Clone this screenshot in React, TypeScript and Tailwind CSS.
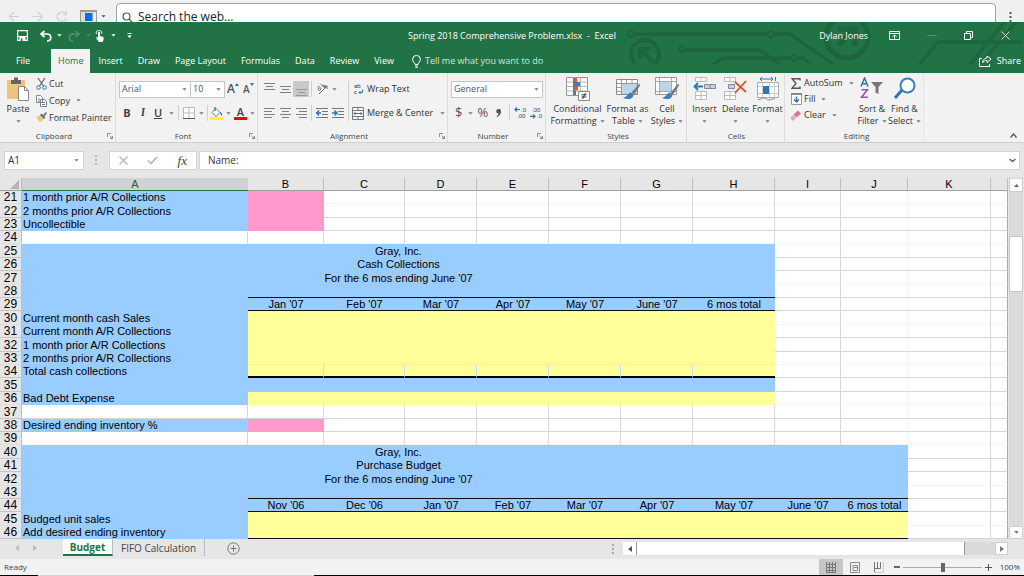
// App.tsx
import React, { useState, type ReactNode } from 'react';

type Fill = 'none' | 'blue' | 'pink' | 'yellow';

type Row = {
  n: number;
  label?: string;
  // text centred across A:H
  title?: string;
  months?: string[];
  // fill of column A, then fill of B up to column `to`
  a?: Fill;
  fill?: Fill;
  to?: number;
  line?: 'header' | 'above' | 'total' | 'end' | 'ticks';
};

const COLUMNS = ['B', 'C', 'D', 'E', 'F', 'G', 'H', 'I', 'J', 'K', ''];

const ROWS: Row[] = [
  { n: 21, label: '1 month prior A/R Collections', a: 'blue', fill: 'pink', to: 1 },
  { n: 22, label: '2 months prior A/R Collections', a: 'blue', fill: 'pink', to: 1 },
  { n: 23, label: 'Uncollectible', a: 'blue', fill: 'pink', to: 1 },
  { n: 24 },
  { n: 25, title: 'Gray, Inc.', a: 'blue', fill: 'blue', to: 7 },
  { n: 26, title: 'Cash Collections', a: 'blue', fill: 'blue', to: 7 },
  { n: 27, title: "For the 6 mos ending June '07", a: 'blue', fill: 'blue', to: 7 },
  { n: 28, a: 'blue', fill: 'blue', to: 7, line: 'above' },
  {
    n: 29,
    months: ["Jan '07", "Feb '07", "Mar '07", "Apr '07", "May '07", "June '07", '6 mos total'],
    a: 'blue',
    fill: 'blue',
    to: 7,
    line: 'header',
  },
  { n: 30, label: 'Current month cash Sales', a: 'blue', fill: 'yellow', to: 7 },
  { n: 31, label: 'Current month A/R Collections', a: 'blue', fill: 'yellow', to: 7 },
  { n: 32, label: '1 month prior A/R Collections', a: 'blue', fill: 'yellow', to: 7 },
  { n: 33, label: '2 months prior A/R Collections', a: 'blue', fill: 'yellow', to: 7, line: 'ticks' },
  { n: 34, label: 'Total cash collections', a: 'blue', fill: 'yellow', to: 7, line: 'total' },
  { n: 35, a: 'blue', fill: 'blue', to: 7 },
  { n: 36, label: 'Bad Debt Expense', a: 'blue', fill: 'yellow', to: 7 },
  { n: 37 },
  { n: 38, label: 'Desired ending inventory %', a: 'blue', fill: 'pink', to: 1 },
  { n: 39 },
  { n: 40, title: 'Gray, Inc.', a: 'blue', fill: 'blue', to: 9 },
  { n: 41, title: 'Purchase Budget', a: 'blue', fill: 'blue', to: 9 },
  { n: 42, title: "For the 6 mos ending June '07", a: 'blue', fill: 'blue', to: 9 },
  { n: 43, a: 'blue', fill: 'blue', to: 9, line: 'above' },
  {
    n: 44,
    months: ["Nov '06", "Dec '06", "Jan '07", "Feb '07", "Mar '07", "Apr '07", "May '07", "June '07", '6 mos total'],
    a: 'blue',
    fill: 'blue',
    to: 9,
    line: 'header',
  },
  { n: 45, label: 'Budged unit sales', a: 'blue', fill: 'yellow', to: 9 },
  { n: 46, label: 'Add desired ending inventory', a: 'blue', fill: 'yellow', to: 9, line: 'end' },
];

const fills: Record<Fill, string> = {
  none: 'bg-white',
  blue: 'bg-[#99ccff]',
  pink: 'bg-[#ff99cc]',
  yellow: 'bg-[#ffff99]',
};

const bottoms: Record<Fill, string> = {
  none: '',
  blue: 'border-b border-b-[#99ccff]',
  pink: 'border-b border-b-[#ff99cc]',
  yellow: 'border-b border-b-[#ffff99]',
};

const Caret = ({ className = 'text-[#777]' }: { className?: string }) => (
  <svg width="5" height="3" viewBox="0 0 5 3" className={`shrink-0 ${className}`}>
    <path d="M.3.200h4.400L2.500 2.600z" fill="currentColor" />
  </svg>
);

const Sep = () => <span className="h-4 w-px shrink-0 bg-[#d0d0d0]" />;

/* ---------- Browser strip and title bar ---------- */

const BrowserStrip = () => (
  <div className="flex h-[22px] items-start overflow-hidden bg-[#f0f0f0] pt-[3px]">
    <div className="flex w-[116px] shrink-0 items-center gap-3 pt-[7px] pl-2 text-[#cfcfcf]">
      <svg width="12" height="13" viewBox="0 0 12 13" fill="none" stroke="currentColor" strokeWidth="1.2">
        <path d="M11 6.500H1.500M6 2L1.500 6.500 6 11" />
      </svg>
      <svg width="12" height="13" viewBox="0 0 12 13" fill="none" stroke="currentColor" strokeWidth="1.2">
        <path d="M0 6.500h10M6 2l4.500 4.500L6 11" />
      </svg>
      <svg width="12" height="13" viewBox="0 0 12 13" fill="none" stroke="currentColor" strokeWidth="1.2">
        <path d="M10.500 8A4.700 4.700 0 1 1 9.500 3.500M10.500 1v3.500H7" />
      </svg>
      <div className="flex items-center gap-1 text-[#555]">
        <svg width="17" height="13" viewBox="0 0 17 13">
          <path d="M0 0h17v13H0z" fill="#9a9a9a" />
          <path d="M1 2h15v11H1z" fill="#dcdcdc" />
          <path d="M5 3h7.500v8H5z" fill="#0a6fdc" />
          <path d="M13.500 3h2v8h-2z" fill="#f5f5f5" />
        </svg>
        <Caret className="text-[#555]" />
      </div>
    </div>
    <label className="flex h-7 flex-1 items-center gap-[5px] rounded-t-sm border border-[#a0a0a0] bg-white pl-[5px]">
      <svg width="11" height="11" viewBox="0 0 11 11" fill="none" stroke="#555" strokeWidth="1.200">
        <circle cx="4.500" cy="4.500" r="3.500" />
        <path d="M7 7l3.500 3.500" />
      </svg>
      <input
        type="text"
        aria-label="Search the web"
        placeholder="Search the web..."
        className="min-w-0 flex-1 bg-transparent text-xs text-[#222] outline-none placeholder:text-[#222]"
      />
    </label>
    <button type="button" aria-label="More" className="w-7 pt-2">
      <svg width="3" height="14" viewBox="0 0 3 14" className="mx-auto" fill="#555">
        <path d="M.5 1h2v2h-2zM.5 5h2v2h-2zM.5 9h2v2h-2z" />
      </svg>
    </button>
  </div>
);

const Circuit = () => (
  <svg
    width="404"
    height="42"
    viewBox="620 22 404 42"
    className="pointer-events-none absolute top-0 right-0"
    fill="none"
    stroke="#1c653d"
    strokeWidth="3"
  >
    <circle cx="631" cy="34" r="3" strokeWidth="2" />
    <path d="M634 34h134M774 34h16l43 30" />
    <circle cx="771" cy="34" r="3" strokeWidth="2" />
    <circle cx="645" cy="54" r="14" strokeWidth="4" />
    <path d="M640 59V49h10M640 49l13 13" strokeWidth="4" />
    <circle cx="682" cy="49" r="3" strokeWidth="2" />
    <path d="M685 50h75l19 14M712 65l11-7h68M797 58h6l9 7" />
    <circle cx="794" cy="58" r="3" strokeWidth="2" />
    <circle cx="847" cy="37" r="21" strokeWidth="5" />
    <path d="M838 29h17v17M854 30l-16 15" strokeWidth="5" />
    <path d="M919 65l19-23h83M970 65l35-44M980 65l37-44" />
  </svg>
);

const TitleBar = () => (
  <div className="relative grid h-[27px] grid-cols-[1fr_auto_1fr] items-center text-white">
    <div className="flex items-center pl-[17px]">
      <button type="button" aria-label="Save">
        <svg width="11" height="11" viewBox="0 0 11 11" fill="none" stroke="#fff" strokeWidth="1.200">
          <path d="M.6.6h9.800v9.800H.6zM1 6.500h9" />
          <path d="M2.500 7h6v3.500h-6z" fill="#fff" stroke="none" />
          <path d="M4 8.500h1.500V11H4z" fill="#217346" stroke="none" />
        </svg>
      </button>
      <button type="button" aria-label="Undo" className="ml-3 flex items-center gap-[5px]">
        <svg width="12" height="12" viewBox="0 0 12 12" fill="none" stroke="#fff" strokeWidth="1.700">
          <path d="M4.500 1L1 4l3.500 3M1 4h6c5 0 5 7 0 7" />
        </svg>
        <Caret className="text-white" />
      </button>
      <button type="button" aria-label="Redo" className="ml-[6px] flex items-center gap-[6px] text-[#4d8f6b]">
        <svg width="12" height="12" viewBox="0 0 12 12" fill="none" stroke="currentColor" strokeWidth="1.600">
          <path d="M7.500 1L11 4 7.500 7M11 4H5c-5 0-5 7 0 7" />
        </svg>
        <Caret className="text-[#4d8f6b]" />
      </button>
      <button type="button" aria-label="Touch mode" className="ml-1 flex items-center gap-[6px]">
        <svg width="10" height="12" viewBox="0 0 10 12" fill="#fff">
          <path d="M3 2.500a1 1 0 0 1 2 0V6l3.500 1v3L7.500 12H4L1 8l1-1 1 .8z" />
          <path d="M1.500 4a2.800 2.800 0 1 1 5 0" fill="none" stroke="#fff" />
        </svg>
        <Caret className="text-white" />
      </button>
      <button type="button" aria-label="Customize toolbar" className="ml-[11px]">
        <svg width="5" height="6" viewBox="0 0 5 6" fill="#fff">
          <path d="M.5 0h4v1h-4zM.3 2.500h4.400L2.500 5z" />
        </svg>
      </button>
    </div>
    <span className="text-[9px] whitespace-pre">Spring 2018 Comprehensive Problem.xlsx  -  Excel</span>
    <div className="flex items-center justify-end pr-[14px]">
      <span className="mr-[21px] text-[9px]">Dylan Jones</span>
      <button type="button" aria-label="Ribbon display options">
        <svg width="11" height="9" viewBox="0 0 11 9" fill="none" stroke="#fff">
          <path d="M.5.500h10v8H.5zM1 2.500h9M5.500 8V4M3.500 5.800l2-2 2 2" />
        </svg>
      </button>
      <button type="button" aria-label="Minimize" className="ml-[27px]">
        <svg width="10" height="2" viewBox="0 0 10 2">
          <path d="M0 .5h10" stroke="#4d8f6b" />
        </svg>
      </button>
      <button type="button" aria-label="Restore" className="ml-[27px]">
        <svg width="9" height="9" viewBox="0 0 9 9" fill="none" stroke="#fff">
          <path d="M.5 2.500h6v6h-6zM2.500 2V.500h6v6H7" />
        </svg>
      </button>
      <button type="button" aria-label="Close" className="ml-7">
        <svg width="9" height="9" viewBox="0 0 9 9" stroke="#fff" strokeWidth=".8">
          <path d="M.5.500l8 8M8.500.500l-8 8" />
        </svg>
      </button>
    </div>
  </div>
);

const TABS = ['Home', 'Insert', 'Draw', 'Page Layout', 'Formulas', 'Data', 'Review', 'View'];

const RibbonTabs = ({ active, onSelect }: { active: string; onSelect: (t: string) => void }) => (
  <div className="relative flex h-6 items-stretch gap-px text-[9px] text-white">
    <button type="button" className="w-[50px] pr-1 text-center">
      File
    </button>
    {TABS.map((t) => (
      <button
        key={t}
        type="button"
        onClick={() => onSelect(t)}
        className={t === active ? 'bg-[#f2f2f2] px-[7px] text-[#217346]' : 'px-[7px]'}
      >
        {t}
      </button>
    ))}
    <button type="button" className="ml-[10px] flex items-center gap-1 text-[#d5e6dc]">
      <svg width="9" height="13" viewBox="0 0 9 13" fill="none" stroke="#fff">
        <path d="M3 9.500C3 7.500.600 7 .6 4.300a3.900 3.900 0 0 1 7.800 0C8.400 7 6 7.500 6 9.500zM3 11h3M3.500 12.500h2" />
      </svg>
      Tell me what you want to do
    </button>
    <button type="button" className="mr-[3px] ml-auto flex items-center gap-[5px]">
      <svg width="13" height="12" viewBox="0 0 13 12" fill="none" stroke="#fff">
        <path d="M3 3.500H.5v8h10V9M8 1l4 3-4 3.500V5.500C6 5.300 4.500 6 3.500 8c0-3 2-5 4.500-5z" />
      </svg>
      Share
    </button>
  </div>
);

/* ---------- Ribbon ---------- */

const Group = ({
  label,
  className,
  launcher,
  children,
}: {
  label: string;
  className: string;
  launcher?: boolean;
  children: ReactNode;
}) => (
  <section className={`flex shrink-0 flex-col ${className}`}>
    <div className="flex h-14 items-start">{children}</div>
    <div className="flex h-[13px] items-center text-[8px] text-[#444]">
      <span className="flex-1 text-center">{label}</span>
      {launcher && (
        <button type="button" aria-label={`${label} settings`} className="flex w-[10px] justify-center">
          <svg width="6" height="6" viewBox="0 0 6 6" fill="none" stroke="#777" strokeWidth=".8">
            <path d="M.5 4V.500H4M2.500 2.500l3 3M5.500 3v2.500H3" />
          </svg>
        </button>
      )}
    </div>
  </section>
);

const BigButton = ({
  icon,
  lines,
  className,
}: {
  icon: ReactNode;
  lines: string[];
  className: string;
}) => (
  <button type="button" className={`flex shrink-0 flex-col items-center pt-1 text-[9px] leading-3 ${className}`}>
    <span className="flex h-[26px] items-start">{icon}</span>
    <span className="whitespace-nowrap">{lines[0]}</span>
    <span className="flex h-3 items-center gap-[3px] whitespace-nowrap">
      {lines[1]}
      <Caret />
    </span>
  </button>
);

const LineButton = ({
  icon,
  text,
  caret,
  className = 'h-[17px] gap-[2px]',
}: {
  icon: ReactNode;
  text: string;
  caret?: boolean;
  className?: string;
}) => (
  <button type="button" className={`flex items-center text-[9px] whitespace-nowrap ${className}`}>
    <span className="flex w-3 shrink-0 justify-center">{icon}</span>
    {text}
    {caret && (
      <span className="ml-1">
        <Caret />
      </span>
    )}
  </button>
);

const RibbonSelect = ({ label, value, className }: { label: string; value: string; className: string }) => (
  <span className={`relative flex h-[17px] shrink-0 items-center border border-[#c6c6c6] bg-white ${className}`}>
    <select
      aria-label={label}
      defaultValue={value}
      className="w-full appearance-none bg-transparent px-[2px] text-[9px] text-[#44546a] outline-none"
    >
      <option>{value}</option>
    </select>
    <span className="pointer-events-none absolute right-[3px]">
      <Caret />
    </span>
  </span>
);

// three alignments of the same paragraph lines
const LINES = {
  top: 'M0 .5h11M2 3.500h7M0 6.500h11',
  middle: 'M0 3.500h11M2 6.500h7M0 9.500h11',
  bottom: 'M0 6.500h11M2 9.500h7M0 12.500h11',
  left: 'M0 1.500h11M0 4.500h8M0 7.500h11M0 10.500h8',
  center: 'M0 1.500h11M2 4.500h7M0 7.500h11M2 10.500h7',
  right: 'M0 1.500h11M3 4.500h8M0 7.500h11M3 10.500h8',
};

const AlignButton = ({ kind, selected }: { kind: keyof typeof LINES; selected?: boolean }) => (
  <button
    type="button"
    aria-label={`Align ${kind}`}
    className={selected ? 'flex h-4 w-4 items-center justify-center bg-[#c9c9c9]' : 'flex h-4 w-4 items-center justify-center'}
  >
    <svg width="11" height="13" viewBox="0 0 11 13" stroke={selected ? '#999' : '#808080'}>
      <path d={LINES[kind]} />
    </svg>
  </button>
);

const IndentIcon = ({ flip }: { flip?: boolean }) => (
  <svg width="12" height="12" viewBox="0 0 12 12" fill="none">
    <path d="M0 1.500h12M6 4.500h6M6 7.500h6M0 10.500h12" stroke="#777" />
    <path d={flip ? 'M0 6h4.500M2.500 3.500L5 6 2.500 8.500' : 'M5 6H.5M3 3.500L.5 6 3 8.500'} stroke="#2f74b5" strokeWidth="1.500" />
  </svg>
);

const DecimalIcon = ({ flip }: { flip?: boolean }) => (
  <svg width="13" height="14" viewBox="0 0 13 14" fontSize="6" fill="#444" className="font-[Liberation_Sans,sans-serif]">
    <text x={flip ? 2 : 7} y="5.500">{flip ? '.00' : '.0'}</text>
    <text x={flip ? 7 : 3} y="12.300">{flip ? '.0' : '.00'}</text>
    <path
      d={flip ? 'M0 10.300h5M3 8.300l2 2-2 2' : 'M6 3.500H1M3 1.500l-2 2 2 2'}
      fill="none"
      stroke="#2f74b5"
      strokeWidth="1.200"
    />
  </svg>
);

const Brush = () => (
  <>
    <path d="M23.500 6.500l-8 9 2.500 2 6-9z" fill="#777" />
    <path d="M15 15.500c-3 0-3 4-8 5.500 4 2 10 1.500 10.500-3z" fill="#3c7ebf" />
  </>
);

const ConditionalIcon = () => (
  <svg width="24" height="24" viewBox="0 0 24 24">
    <path d="M.5.500h21v18H.5z" fill="#fff" stroke="#999" />
    <path d="M7.500 1v17M14.500 1v17M1 5h20M1 9.500h20M1 14h20" stroke="#bbb" />
    <path d="M7 1h4v4H7zM7 9h5v4.500H7z" fill="#e0592f" />
    <path d="M7 5h7v4.500H7zM7 13.500h3v4.500H7z" fill="#3c7ebf" />
    <path d="M12.500 14.500h11v9h-11z" fill="#fff" stroke="#888" />
    <path d="M15.500 17.800h5M15.500 20h5M19.500 16l-3 6" stroke="#333" />
  </svg>
);

const TableIcon = () => (
  <svg width="24" height="24" viewBox="0 0 24 24">
    <path d="M.5 2.500h21v15H.5z" fill="#fff" stroke="#888" />
    <path d="M6 7h15v10H6z" fill="#bdd3ea" />
    <path d="M1 6.500h20M1 10.500h5M1 14.500h5M5.500 3v14M10.500 3v3M16 3v3" stroke="#999" fill="none" />
    <Brush />
  </svg>
);

const CellStyleIcon = () => (
  <svg width="24" height="24" viewBox="0 0 24 24">
    <path d="M.5.500h21v17H.5z" fill="#fff" stroke="#999" />
    <path d="M4 5h13v9H4z" fill="#bdd3ea" />
    <path d="M1 4.500h20M1 14.500h20M4.500 1v16M16.500 1v16" stroke="#aaa" fill="none" />
    <Brush />
  </svg>
);

const InsertIcon = () => (
  <svg width="23" height="24" viewBox="0 0 23 24">
    <path d="M2.500.500h11v4h-11zM8 .5v4M2.500 14.500h11v8h-11zM8 14.500v8M2.500 18.500h11" fill="#fff" stroke="#bbb" />
    <path d="M11.500 7.500h11v4h-11zM17 7.500v4" fill="#bdd3ea" stroke="#889" />
    <path d="M10 9.500H1.500M5 6L1.500 9.500 5 13" fill="none" stroke="#2f74b5" strokeWidth="1.800" />
  </svg>
);

const DeleteIcon = () => (
  <svg width="23" height="24" viewBox="0 0 23 24">
    <path d="M.5.500h11v4H.5zM6 .5v4M.5 14.500h11v8H.5zM6 14.500v8M.5 18.500h11" fill="#fff" stroke="#bbb" />
    <path d="M4.500 7.500h6v4h-6z" fill="#bdd3ea" stroke="#889" />
    <path d="M11 5l11 10M22 4L11 16" fill="none" stroke="#d9532c" strokeWidth="1.800" />
  </svg>
);

const FormatIcon = () => (
  <svg width="22" height="24" viewBox="0 0 22 24">
    <path d="M.5 5.500h21v15H.5z" fill="#fff" stroke="#aaa" />
    <path d="M5.500 6v14M12.500 6v14M17.500 6v14M1 9.500h20M1 16.500h20" stroke="#ccc" />
    <path d="M6 9h6v8H6z" fill="#2f74b5" />
    <path d="M3 2h13M5 0L3 2l2 2M14 0l2 2-2 2M18.500 0v4" fill="none" stroke="#2f74b5" />
    <path d="M1 22.500c4 0 3-1.500 6-1.500s2 2 5 2 3-2 6-1" fill="none" stroke="#888" />
  </svg>
);

const SortIcon = () => (
  <svg width="24" height="24" viewBox="0 0 24 24" fill="none" strokeWidth="1.500">
    <path d="M1 9.500L4.500 1 8 9.500M2.200 6.700h4.600" stroke="#2f74b5" />
    <path d="M1.500 12.700h6L1.500 20.200h6.500" stroke="#9553b5" />
    <path d="M11 5h12l-4.500 5v7l-3-1.500V10z" fill="#777" />
  </svg>
);

const Ribbon = () => (
  <div className="flex h-[70px] items-stretch border-b border-[#cfcfcf] bg-[#f2f2f2] text-[#333]">
    <Group label="Clipboard" launcher className="w-[116px] border-r border-[#dcdcdc] pl-[3px]">
      <BigButton
        className="w-[30px]"
        lines={['Paste', '']}
        icon={
          <svg width="22" height="24" viewBox="0 0 22 24">
            <path d="M0 3h18v19H0z" fill="#ecc47c" />
            <path d="M4 3h3V.5h4V3h3v4H4z" fill="#666" />
            <path d="M11.500 9.500h6l4 4v10h-10z" fill="#fff" stroke="#888" />
            <path d="M17.500 9.500v4h4" fill="none" stroke="#888" />
          </svg>
        }
      />
      <div className="flex flex-col pt-[2px] pl-[2px]">
        <LineButton
          text="Cut"
          icon={
            <svg width="11" height="12" viewBox="0 0 11 12" fill="none">
              <path d="M2 0l5.500 8M9 0L3.500 8" stroke="#666" strokeWidth="1.200" />
              <circle cx="2.500" cy="9.500" r="1.800" stroke="#2f74b5" />
              <circle cx="8.500" cy="9.500" r="1.800" stroke="#2f74b5" />
            </svg>
          }
        />
        <LineButton
          text="Copy"
          caret
          icon={
            <svg width="11" height="12" viewBox="0 0 11 12" fill="#fff" stroke="#777" strokeWidth=".9">
              <path d="M.5.500h4l2 2v5h-6zM4.500 4.500h4l2 2v5h-6z" />
              <path d="M2 4h2M2 6h2M6 7.500h3M6 9.500h3" stroke="#2f74b5" />
            </svg>
          }
        />
        <LineButton
          text="Format Painter"
          icon={
            <svg width="12" height="11" viewBox="0 0 12 11">
              <path d="M1 5l4-1.500L8.500 7 5 10.500z" fill="#ecc47c" />
              <path d="M5 3l1.500-1.500 4 4L9 7zM8 3l3-3 1 1-2.500 3z" fill="#666" />
            </svg>
          }
        />
      </div>
    </Group>

    <Group label="Font" launcher className="w-[142px] border-r border-[#dcdcdc] pl-[3px]">
      <div className="flex flex-col gap-2 pt-2">
        <div className="flex h-4 items-center">
          <RibbonSelect label="Font name" value="Arial" className="w-[72px]" />
          <RibbonSelect label="Font size" value="10" className="w-[34px] border-l-0" />
          <button type="button" aria-label="Grow font" className="ml-[2px] flex text-[12px] leading-4 font-semibold text-[#555]">
            A
            <svg width="4" height="3" viewBox="0 0 4 3" className="mt-[2px]">
              <path d="M0 3l2-3 2 3z" fill="#2f74b5" />
            </svg>
          </button>
          <button type="button" aria-label="Shrink font" className="ml-1 flex text-[10px] leading-4 font-semibold text-[#555]">
            A
            <svg width="4" height="3" viewBox="0 0 4 3" className="mt-[2px]">
              <path d="M0 0h4L2 3z" fill="#2f74b5" />
            </svg>
          </button>
        </div>
        <div className="flex h-4 items-center text-[11px] text-[#444]">
          <button type="button" className="w-4 font-bold">
            B
          </button>
          <button type="button" className="w-4 font-serif font-semibold italic">
            I
          </button>
          <button type="button" className="mr-1 w-[14px] font-semibold underline">
            U
          </button>
          <Caret />
          <span className="ml-1 flex">
            <Sep />
          </span>
          <button type="button" aria-label="Borders" className="ml-1 flex items-center gap-1">
            <svg width="12" height="12" viewBox="0 0 12 12" fill="#fff" stroke="#bbb">
              <path d="M.5.500h11v11H.5zM6 0v12M0 6h12" />
              <path d="M0 11.500h12" stroke="#555" />
            </svg>
            <Caret />
          </button>
          <span className="ml-[3px] flex">
            <Sep />
          </span>
          <button type="button" aria-label="Fill color" className="ml-[2px] flex items-center gap-[3px]">
            <svg width="13" height="13" viewBox="0 0 13 13">
              <path d="M2 5.500l4-4L10 5.500l-4 4z" fill="#fff" stroke="#777" />
              <path d="M5 0v4M10 5.500c2 1 1.500 3 1.500 3" stroke="#2f74b5" fill="none" strokeWidth="1.300" />
              <path d="M0 10h13v3H0z" fill="#ffff00" />
            </svg>
            <Caret />
          </button>
          <button type="button" aria-label="Font color" className="ml-[3px] flex items-center gap-[3px]">
            <span className="flex h-[13px] w-[13px] items-start justify-center border-b-[3px] border-[#ff0000] text-[11px] leading-[10px] font-semibold">
              A
            </span>
            <Caret />
          </button>
        </div>
      </div>
    </Group>

    <Group label="Alignment" launcher className="w-[190px] border-r border-[#dcdcdc] pl-[3px]">
      <div className="flex flex-col gap-2 pt-2">
        <div className="flex h-4 items-center">
          <AlignButton kind="top" />
          <AlignButton kind="middle" />
          <AlignButton kind="bottom" selected />
          <span className="ml-[2px] flex">
            <Sep />
          </span>
          <button type="button" aria-label="Orientation" className="ml-1 flex items-center gap-1">
            <svg width="12" height="12" viewBox="0 0 12 12" fill="none" stroke="#666">
              <path d="M3 11l8-8M8 3h3v3" />
              <path d="M1.500 4.500c1.500-2 3 0 3.500 1.500M5 6L3.500 7.500C1 6.500 2 5 3.500 5.500M4.500.800l4 4c1.500-2-.500-3-2-2" />
            </svg>
            <Caret />
          </button>
        </div>
        <div className="flex h-4 items-center">
          <AlignButton kind="left" />
          <AlignButton kind="center" />
          <AlignButton kind="right" />
          <span className="ml-[2px] flex">
            <Sep />
          </span>
          <button type="button" aria-label="Decrease indent" className="ml-1">
            <IndentIcon />
          </button>
          <button type="button" aria-label="Increase indent" className="ml-1">
            <IndentIcon flip />
          </button>
        </div>
      </div>
      <div className="mt-2 ml-1 flex flex-col gap-2 border-l border-[#d0d0d0] pl-[3px]">
        <LineButton
          text="Wrap Text"
          className="h-4 gap-[3px]"
          icon={
            <svg width="12" height="14" viewBox="0 0 12 14" fontSize="6" fill="#333" className="font-[Liberation_Sans,sans-serif]">
              <text x="2" y="5.500">ab</text>
              <text x="2" y="12.300">c</text>
              <path d="M10.500 7.500v3H7M8.500 9L7 10.500 8.500 12" fill="none" stroke="#2f74b5" />
            </svg>
          }
        />
        <LineButton
          text="Merge & Center"
          caret
          className="h-4 gap-[3px]"
          icon={
            <svg width="12" height="13" viewBox="0 0 12 13" fill="#fff" stroke="#777">
              <path d="M.5.500h11v12H.5zM.5 3.500h11M.5 9.500h11M6 .5v3M6 9.500v3" />
              <path d="M2 6.500h8M3.500 5L2 6.500 3.500 8M8.500 5L10 6.500 8.500 8" fill="none" stroke="#2f74b5" />
            </svg>
          }
        />
      </div>
    </Group>

    <Group label="Number" launcher className="w-[98px] border-r border-[#dcdcdc] pl-[3px]">
      <div className="flex flex-col gap-2 pt-2">
        <div className="flex h-4 items-center">
          <RibbonSelect label="Number format" value="General" className="w-[92px]" />
        </div>
        <div className="flex h-4 items-center text-[13px] text-[#555]">
          <button type="button" className="mr-1 ml-1 flex items-center gap-[6px]">
            $ <Caret />
          </button>
          <button type="button">%</button>
          <button type="button" className="ml-2" aria-label="Comma style">
            <svg width="5" height="8" viewBox="0 0 5 8">
              <path d="M2.500 0A2.300 2.300 0 0 1 5 2.500C5 5 3.500 7 1 8l-.5-.8C2 6.500 2.500 5.500 2.500 4.600A2.300 2.300 0 0 1 2.500 0z" fill="#555" />
            </svg>
          </button>
          <span className="ml-2 flex">
            <Sep />
          </span>
          <button type="button" aria-label="Increase decimal" className="ml-1 shrink-0">
            <DecimalIcon />
          </button>
          <button type="button" aria-label="Decrease decimal" className="ml-[3px] shrink-0">
            <DecimalIcon flip />
          </button>
        </div>
      </div>
    </Group>

    <Group label="Styles" className="w-[141px] border-r border-[#dcdcdc] pl-1">
      <BigButton className="w-[55px]" lines={['Conditional', 'Formatting']} icon={<ConditionalIcon />} />
      <BigButton className="w-[45px]" lines={['Format as', 'Table']} icon={<TableIcon />} />
      <BigButton className="w-[34px]" lines={['Cell', 'Styles']} icon={<CellStyleIcon />} />
    </Group>

    <Group label="Cells" className="w-[98px] border-r border-[#dcdcdc] pl-[2px]">
      <BigButton className="w-[31px]" lines={['Insert', '']} icon={<InsertIcon />} />
      <BigButton className="w-[31px]" lines={['Delete', '']} icon={<DeleteIcon />} />
      <BigButton className="w-[33px]" lines={['Format', '']} icon={<FormatIcon />} />
    </Group>

    <Group label="Editing" className="w-[139px] border-r border-[#e6e6e6] pl-[5px]">
      <div className="flex w-[66px] shrink-0 flex-col pt-[2px]">
        <LineButton
          text="AutoSum"
          caret
          className="h-4 gap-[2px]"
          icon={
            <svg width="10" height="11" viewBox="0 0 10 11" fill="none" stroke="#555" strokeWidth="1.400">
              <path d="M9 2.500V.700H1l4 4.800-4 4.800h8V8.500" />
            </svg>
          }
        />
        <LineButton
          text="Fill"
          caret
          className="h-4 gap-[2px]"
          icon={
            <svg width="11" height="12" viewBox="0 0 11 12">
              <path d="M.5.500h10v11H.5z" fill="#fff" stroke="#999" />
              <path d="M0 0h11v2H0z" fill="#888" />
              <path d="M5.500 3.500V9M3 6.500L5.500 9 8 6.500" fill="none" stroke="#2f74b5" strokeWidth="1.500" />
            </svg>
          }
        />
        <LineButton
          text="Clear"
          caret
          className="h-4 gap-[2px]"
          icon={
            <svg width="12" height="11" viewBox="0 0 12 11">
              <path d="M3.500 4.500L8 .5 11 3.500 6.500 7.500z" fill="#e4738a" />
              <path d="M3 5l3 3-2.500 2.500H2L.5 8z" fill="#f0a2b1" />
            </svg>
          }
        />
      </div>
      <BigButton className="w-[32px]" lines={['Sort &', 'Filter']} icon={<SortIcon />} />
      <BigButton
        className="w-[33px]"
        lines={['Find &', 'Select']}
        icon={
          <svg width="22" height="22" viewBox="0 0 22 22">
            <path d="M1 21l7-8" stroke="#2f74b5" strokeWidth="3" />
            <circle cx="13.500" cy="8.500" r="7" fill="#fff" stroke="#3c7ebf" strokeWidth="2" />
          </svg>
        }
      />
    </Group>

    <button type="button" aria-label="Collapse ribbon" className="mr-[7px] mb-1 ml-auto self-end">
      <svg width="7" height="5" viewBox="0 0 7 5" fill="none" stroke="#555" strokeWidth="1.400">
        <path d="M.5 4.500l3-3.500 3 3.500" />
      </svg>
    </button>
  </div>
);

/* ---------- Formula bar ---------- */

const FormulaBar = () => (
  <div className="flex h-[35px] items-start bg-[#e6e6e6] pt-2 pr-1 pl-1 text-[10px] text-[#333]">
    <label className="relative flex h-[19px] w-20 items-center border border-[#d4d4d4] bg-white">
      <input aria-label="Name box" defaultValue="A1" className="w-full bg-transparent px-[3px] outline-none" />
      <span className="pointer-events-none absolute right-1">
        <Caret />
      </span>
    </label>
    <svg width="3" height="11" viewBox="0 0 3 11" className="mx-[11px] mt-1" fill="#b5b5b5">
      <path d="M0 0h2v2H0zM0 4h2v2H0zM0 8h2v2H0z" />
    </svg>
    <div className="flex h-[19px] w-[88px] items-center justify-between border border-[#d4d4d4] bg-white pr-2 pl-[9px]">
      <button type="button" aria-label="Cancel">
        <svg width="9" height="9" viewBox="0 0 9 9" stroke="#b5b5b5" strokeWidth="1.300">
          <path d="M.5.500l8 8M8.500.500l-8 8" />
        </svg>
      </button>
      <button type="button" aria-label="Enter">
        <svg width="11" height="9" viewBox="0 0 11 9" fill="none" stroke="#b5b5b5" strokeWidth="1.700">
          <path d="M1 4.500L4 7.500 10 1" />
        </svg>
      </button>
      <button type="button" className="pr-px font-[Liberation_Serif,serif] text-[13px] leading-4 text-[#444] italic">
        fx
      </button>
    </div>
    <label className="ml-[2px] flex h-[19px] flex-1 items-center border border-[#d4d4d4] bg-white pr-[3px]">
      <input aria-label="Formula" defaultValue="Name:" className="min-w-0 flex-1 bg-transparent pl-2 outline-none" />
      <svg width="7" height="5" viewBox="0 0 7 5" fill="none" stroke="#666" strokeWidth="1.600">
        <path d="M.5 1l3 2.500 3-2.500" />
      </svg>
    </label>
  </div>
);

/* ---------- Sheet ---------- */

const SheetRow = ({ row, index }: { row: Row; index: number }) => {
  const to = row.to ?? 0;
  const height = index % 5 === 1 || index % 5 === 4 ? 'h-[14px]' : 'h-[13px]';
  const grid = index % 3 === 0 ? 'border-b border-b-[#f4f4f4]' : 'border-b border-b-[#d6d6d6]';

  const bottomOf = (fill: Fill, inTable: boolean) => {
    if (inTable && row.line === 'total') return 'border-b-2 border-b-black';
    if (inTable && row.line === 'ticks') return 'border-b border-b-[#f3f38f]';
    if (inTable && row.line) return 'border-b border-b-[#111]';
    return fill === 'none' ? grid : bottoms[fill];
  };

  // right gridline: empty cells have one, filled cells only in the total row
  const sideOf = (k: number, inTable: boolean) => {
    if (inTable) return row.line === 'total' && k < to - 1 ? 'border-r border-r-[#c4e0f4]' : '';
    if (k === COLUMNS.length - 1) return 'border-r border-r-[#a8a8a8]';
    return k === 8 ? 'border-r border-r-[#f6f6f6]' : 'border-r border-r-[#d6d6d6]';
  };

  // titles merge A:H, so the loop below starts at column I
  const first = row.title ? 7 : 0;

  return (
    <tr className={height}>
      <th
        scope="row"
        className={`border-r border-r-[#bdbdbd] bg-[#e6e6e6] p-0 text-center text-xs leading-3 font-normal ${
          index % 3 === 0 ? 'border-b border-b-[#dedede]' : 'border-b border-b-[#c4c4c4]'
        }`}
      >
        {row.n}
      </th>
      {row.title ? (
        <td colSpan={8} className="border-b border-b-[#99ccff] bg-[#99ccff] p-0 text-center">
          {row.title}
        </td>
      ) : (
        <td
          className={`p-0 pl-px whitespace-nowrap ${
            row.a ? `${fills[row.a]} ${bottoms[row.a]}` : `border-r border-r-[#d6d6d6] bg-white ${grid}`
          }`}
        >
          {row.label}
        </td>
      )}
      {COLUMNS.slice(first).map((col, i) => {
        const k = i + first;
        const inTable = k < to;
        const fill: Fill = inTable ? row.fill ?? 'none' : 'none';
        return (
          <td
            key={col || 'rest'}
            className={`p-0 text-center whitespace-nowrap ${fills[fill]} ${sideOf(k, inTable)} ${bottomOf(fill, inTable)}`}
          >
            {row.months?.[k]}
          </td>
        );
      })}
    </tr>
  );
};

const Sheet = () => (
  <div className="flex bg-[#e6e6e6]">
    <table className="min-w-0 flex-1 table-fixed border-separate border-spacing-0 font-[Liberation_Sans,Arial,sans-serif] text-[11px] leading-3 text-black">
      <colgroup>
        <col className="w-[22px]" />
        <col className="w-[226px]" />
        <col className="w-[76px]" />
        <col className="w-[81px]" />
        <col className="w-[72px]" />
        <col className="w-[72px]" />
        <col className="w-[72px]" />
        <col className="w-[72px]" />
        <col className="w-[82px]" />
        <col className="w-[66px]" />
        <col className="w-[67px]" />
        <col className="w-[83px]" />
        <col />
      </colgroup>
      <thead>
        <tr className="h-[13px]">
          <th className="border-r border-b border-r-[#bdbdbd] border-b-[#9f9f9f] p-0">
            <svg width="9" height="9" viewBox="0 0 9 9" className="mr-[2px] ml-auto">
              <path d="M9 0v9H0z" fill="#b4b4b4" />
            </svg>
          </th>
          <th className="border-b border-b-[#217346] bg-[#d2d2d2] p-0 font-normal text-[#1d5c39]">A</th>
          {COLUMNS.map((c) => (
            <th key={c || 'rest'} className="border-r border-b border-r-[#bdbdbd] border-b-[#9f9f9f] p-0 font-normal">
              {c}
            </th>
          ))}
        </tr>
      </thead>
      <tbody>
        {ROWS.map((r, i) => (
          <SheetRow key={r.n} row={r} index={i} />
        ))}
      </tbody>
    </table>
    <div className="flex w-4 shrink-0 flex-col pr-px pl-px">
      <button type="button" aria-label="Scroll up" className="flex h-[14px] items-center justify-center border border-[#cfcfcf] bg-white">
        <svg width="5" height="3" viewBox="0 0 5 3">
          <path d="M0 3h5L2.500 0z" fill="#666" />
        </svg>
      </button>
      <div className="flex-1 bg-[#dadada] pt-[44px]">
        <div className="h-14 border border-[#c4c4c4] bg-white" />
      </div>
      <button type="button" aria-label="Scroll down" className="flex h-[13px] items-center justify-center border border-[#cfcfcf] bg-white">
        <Caret className="text-[#555]" />
      </button>
    </div>
  </div>
);

/* ---------- Sheet tabs and status bar ---------- */

const SheetTabs = () => (
  <div className="flex h-5 items-start bg-[#e6e6e6] text-[10px] text-[#444]">
    <div className="flex h-[18px] w-[63px] items-center gap-[14px] pl-[15px]">
      <svg width="4" height="6" viewBox="0 0 4 6">
        <path d="M4 0v6L0 3z" fill="#bbb" />
      </svg>
      <svg width="4" height="6" viewBox="0 0 4 6">
        <path d="M0 0v6l4-3z" fill="#bbb" />
      </svg>
    </div>
    <button type="button" className="h-[17px] w-[50px] border-r border-b-2 border-r-[#bbb] border-b-[#217346] bg-white leading-4 font-bold text-[#217346]">
      Budget
    </button>
    <button type="button" className="h-[17px] border-r border-[#bbb] px-2 leading-4">
      FIFO Calculation
    </button>
    <button type="button" aria-label="New sheet" className="ml-[22px] flex h-[18px] items-center">
      <svg width="13" height="13" viewBox="0 0 13 13" fill="none" stroke="#777">
        <circle cx="6.500" cy="6.500" r="5.700" />
        <path d="M3.500 6.500h6M6.500 3.500v6" />
      </svg>
    </button>
    <svg width="2" height="10" viewBox="0 0 2 10" className="mt-[5px] mr-[9px] ml-auto" fill="#aaa">
      <path d="M0 0h2v2H0zM0 4h2v2H0zM0 8h2v2H0z" />
    </svg>
    <div className="mt-[3px] mr-4 flex h-[13px] w-[385px]">
      <button type="button" aria-label="Scroll left" className="flex w-[14px] items-center justify-center border-r border-[#999] bg-white">
        <svg width="4" height="6" viewBox="0 0 4 6">
          <path d="M4 0v6L0 3z" fill="#555" />
        </svg>
      </button>
      <div className="flex-1 border-r border-[#999] bg-white" />
      <div className="w-[30px] bg-[#dadada]" />
      <button type="button" aria-label="Scroll right" className="flex w-[13px] items-center justify-center border border-[#cfcfcf] bg-white">
        <svg width="4" height="6" viewBox="0 0 4 6">
          <path d="M0 0v6l4-3z" fill="#777" />
        </svg>
      </button>
    </div>
  </div>
);

const StatusBar = () => (
  <div className="flex h-4 items-center bg-[#f2f2f2] text-[8px] text-[#444]">
    <span className="pl-1">Ready</span>
    <div className="ml-auto flex h-full items-center">
      <button type="button" aria-label="Normal view" className="flex h-full w-6 items-center justify-center bg-[#c6c6c6]">
        <svg width="10" height="11" viewBox="0 0 10 11" fill="none" stroke="#777">
          <path d="M.5 0v11M3.500 0v11M6.500 0v11M9.500 0v11M0 2.500h10M0 5.500h10M0 8.500h10M0 10.500h10" />
        </svg>
      </button>
      <button type="button" aria-label="Page layout view" className="flex w-6 justify-center">
        <svg width="10" height="11" viewBox="0 0 10 11" fill="none" stroke="#888">
          <path d="M.5.500h9v10h-9zM3 3.500v5h4.500v-5zM4 5.500h3" />
        </svg>
      </button>
      <button type="button" aria-label="Page break view" className="flex w-6 justify-center">
        <svg width="10" height="11" viewBox="0 0 10 11" fill="none" stroke="#777">
          <path d="M.5 0v10M3.500 0v6.500M6.500 0v6.500H.5" />
          <path d="M9.500 0v10.500H0" stroke="#ccc" />
        </svg>
      </button>
      <button type="button" aria-label="Zoom out" className="ml-[3px] flex h-3 items-center">
        <span className="h-[2px] w-[6px] bg-[#666]" />
      </button>
      <input
        type="range"
        aria-label="Zoom"
        defaultValue={50}
        className="mx-[3px] h-[9px] w-[79px] appearance-none bg-transparent bg-[linear-gradient(#aaa,#aaa)] bg-[length:100%_1px] bg-center bg-no-repeat [&::-webkit-slider-thumb]:h-[9px] [&::-webkit-slider-thumb]:w-1 [&::-webkit-slider-thumb]:appearance-none [&::-webkit-slider-thumb]:bg-[#666]"
      />
      <button type="button" aria-label="Zoom in">
        <svg width="7" height="7" viewBox="0 0 7 7" stroke="#555">
          <path d="M0 3.500h7M3.500 0v7" />
        </svg>
      </button>
      <span className="w-8 pr-1 text-right">100%</span>
    </div>
  </div>
);

export default function App() {
  const [tab, setTab] = useState('Home');

  return (
    <div className="min-h-screen bg-[#f2f2f2] font-[Open_Sans,Noto_Sans,sans-serif]">
      <BrowserStrip />
      <header className="relative bg-[#217346]">
        <Circuit />
        <TitleBar />
        <RibbonTabs active={tab} onSelect={setTab} />
      </header>
      <Ribbon />
      <FormulaBar />
      <Sheet />
      <SheetTabs />
      <StatusBar />
      <div className="flex h-px bg-black">
        <span className="ml-[38px] w-[276px] bg-[#d4d4d4]" />
      </div>
    </div>
  );
}
